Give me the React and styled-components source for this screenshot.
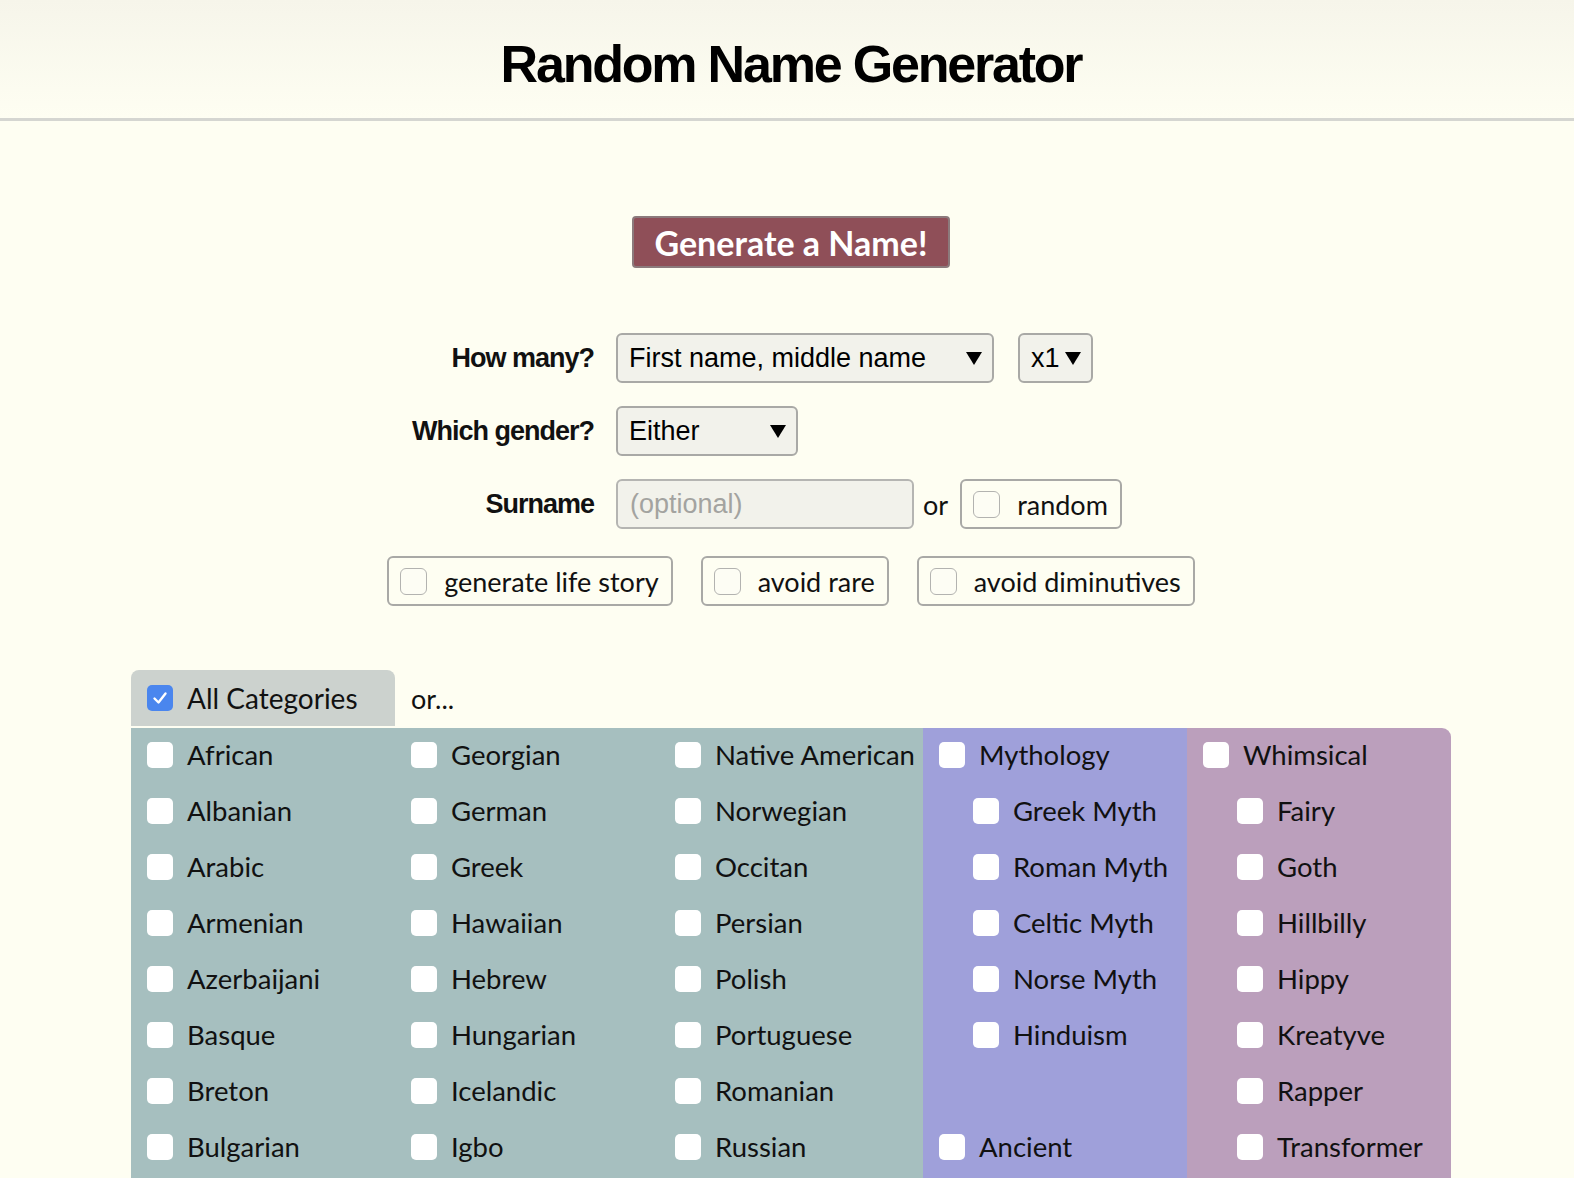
import React from 'react';
import styled, { createGlobalStyle } from 'styled-components';

const GlobalStyle = createGlobalStyle`
	body {
		margin: 0;
		background: #fefef2;
		font-family: Lato, 'Open Sans', sans-serif;
		color: #111;
	}
`;

const Header = styled.header`
	height: 121px;
	box-sizing: border-box;
	padding: 10px 0 0 8px;
	display: flex;
	align-items: center;
	justify-content: center;
	background: linear-gradient(#f6f5ea, #fefef2);
	border-bottom: 3px solid #d5d6d1;
`;

const Title = styled.h1`
	margin: 0;
	font-family: 'Liberation Sans', Arial, sans-serif;
	font-size: 52px;
	font-weight: 700;
	letter-spacing: -2.2px;
	color: #000;
`;

const Main = styled.main`
	width: 1320px;
	margin-left: 131px;
	display: flex;
	flex-direction: column;
	align-items: center;
	padding-top: 95px;
`;

const GenerateButton = styled.button`
	height: 52px;
	padding: 0 20px;
	background: #8f4f58;
	border: 2px solid #8c7a7c;
	border-radius: 4px;
	color: #fff;
	font-family: Lato, sans-serif;
	font-weight: 700;
	font-size: 34px;
	cursor: pointer;
`;

const Form = styled.div`
	align-self: stretch;
	display: grid;
	grid-template-columns: 463px auto;
	column-gap: 22px;
	row-gap: 23px;
	margin-top: 65px;
	align-items: center;
`;

const Label = styled.label`
	text-align: right;
	font-family: 'Liberation Sans', Arial, sans-serif;
	font-weight: 700;
	font-size: 27px;
	letter-spacing: -1px;
`;

const Controls = styled.div`
	display: flex;
	align-items: center;
	gap: 24px;
`;

const Select = styled.div`
	box-sizing: border-box;
	width: ${p => p.width}px;
	height: 50px;
	padding: 0 10px 0 11px;
	display: flex;
	align-items: center;
	justify-content: space-between;
	background: #f2f2eb;
	border: 2px solid #a9a9a6;
	border-radius: 6px;
	font-family: 'Liberation Sans', Arial, sans-serif;
	font-size: 27px;
	color: #000;
`;

const Arrow = styled.span`
	width: 0;
	height: 0;
	border-left: 8px solid transparent;
	border-right: 8px solid transparent;
	border-top: 13px solid #000;
`;

const TextInput = styled.div`
	box-sizing: border-box;
	width: 298px;
	height: 50px;
	padding-left: 12px;
	display: flex;
	align-items: center;
	background: #f2f2eb;
	border: 2px solid #b5b5b2;
	border-radius: 6px;
	font-family: 'Liberation Sans', Arial, sans-serif;
	font-size: 27px;
	color: #a3a3a0;
`;

const OrText = styled.span`
	font-size: 27px;
	margin: 0 -12px 0 -15px;
`;

const CheckPill = styled.label`
	box-sizing: border-box;
	height: 50px;
	padding: 0 12px 0 11px;
	display: flex;
	align-items: center;
	gap: 17px;
	border: 2px solid #a9a9a6;
	border-radius: 6px;
	font-size: 27px;
`;

const EmptyBox = styled.span`
	box-sizing: border-box;
	width: 27px;
	height: 27px;
	border: 1px solid #b3b3b0;
	border-radius: 6px;
	background: #fdfdf4;
`;

const Options = styled.div`
	grid-column: 1 / span 2;
	display: flex;
	justify-content: center;
	gap: 28px;
	margin-top: 4px;
`;

const Categories = styled.section`
	align-self: stretch;
	margin-top: 64px;
`;

const TabRow = styled.div`
	display: flex;
	align-items: center;
`;

const Tab = styled.label`
	width: 264px;
	height: 56px;
	box-sizing: border-box;
	padding-left: 16px;
	display: flex;
	align-items: center;
	gap: 14px;
	background: #ccd2ce;
	border-radius: 8px 8px 0 0;
	font-size: 28px;
`;

const OrMore = styled.span`
	margin-left: 16px;
	font-size: 27px;
`;

const Grid = styled.div`
	margin-top: 2px;
	display: grid;
	grid-template-columns: repeat(5, 1fr);
	border-top-right-radius: 9px;
	overflow: hidden;
`;

const Column = styled.div`
	background: ${p => p.bg};
	padding-bottom: 40px;
`;

const Item = styled.label`
	height: 56px;
	box-sizing: border-box;
	padding-bottom: 3px;
	display: flex;
	align-items: center;
	gap: 14px;
	padding-left: ${p => (p.indent ? 50 : 16)}px;
	font-size: 27.5px;
	white-space: nowrap;
	color: #111;
`;

const Box = styled.span`
	flex: none;
	width: 26px;
	height: 26px;
	border-radius: 5px;
	background: ${p => (p.checked ? '#4a86ee' : '#fff')};
	display: flex;
	align-items: center;
	justify-content: center;
`;

const Check = ({ checked }) => (
	<Box checked={checked}>
		{checked && (
			<svg width='18' height='18' viewBox='0 0 18 18'>
				<path d='M3.5 9.5 L7.5 13.5 L14.5 4.5' fill='none' stroke='#fff' strokeWidth='2.4' strokeLinecap='round' strokeLinejoin='round' />
			</svg>
		)}
	</Box>
);

const TEAL = '#a6bfbf';
const columns = [
	{ bg: TEAL, items: ['African', 'Albanian', 'Arabic', 'Armenian', 'Azerbaijani', 'Basque', 'Breton', 'Bulgarian'] },
	{ bg: TEAL, items: ['Georgian', 'German', 'Greek', 'Hawaiian', 'Hebrew', 'Hungarian', 'Icelandic', 'Igbo'] },
	{ bg: TEAL, items: ['Native American', 'Norwegian', 'Occitan', 'Persian', 'Polish', 'Portuguese', 'Romanian', 'Russian'] },
	{
		bg: '#9fa0da',
		items: ['Mythology', '>Greek Myth', '>Roman Myth', '>Celtic Myth', '>Norse Myth', '>Hinduism', '', 'Ancient'],
	},
	{
		bg: '#bb9fbc',
		items: ['Whimsical', '>Fairy', '>Goth', '>Hillbilly', '>Hippy', '>Kreatyve', '>Rapper', '>Transformer'],
	},
];

const App = () => {
	return (
		<>
			<GlobalStyle />
			<Header>
				<Title>Random Name Generator</Title>
			</Header>
			<Main>
				<GenerateButton>Generate a Name!</GenerateButton>
				<Form>
					<Label>How many?</Label>
					<Controls>
						<Select width={378}>
							First name, middle name <Arrow />
						</Select>
						<Select width={75}>
							x1 <Arrow />
						</Select>
					</Controls>
					<Label>Which gender?</Label>
					<Controls>
						<Select width={182}>
							Either <Arrow />
						</Select>
					</Controls>
					<Label>Surname</Label>
					<Controls>
						<TextInput>(optional)</TextInput>
						<OrText>or</OrText>
						<CheckPill>
							<EmptyBox />
							random
						</CheckPill>
					</Controls>
					<Options>
						<CheckPill>
							<EmptyBox />
							generate life story
						</CheckPill>
						<CheckPill>
							<EmptyBox />
							avoid rare
						</CheckPill>
						<CheckPill>
							<EmptyBox />
							avoid diminutives
						</CheckPill>
					</Options>
				</Form>
				<Categories>
					<TabRow>
						<Tab>
							<Check checked />
							All Categories
						</Tab>
						<OrMore>or...</OrMore>
					</TabRow>
					<Grid>
						{columns.map((col, i) => (
							<Column key={i} bg={col.bg}>
								{col.items.map((name, j) =>
									name === '' ? (
										<Item key={j} />
									) : (
										<Item key={j} indent={name.startsWith('>')}>
											<Check />
											{name.replace('>', '')}
										</Item>
									)
								)}
							</Column>
						))}
					</Grid>
				</Categories>
			</Main>
		</>
	);
};

export default App;
